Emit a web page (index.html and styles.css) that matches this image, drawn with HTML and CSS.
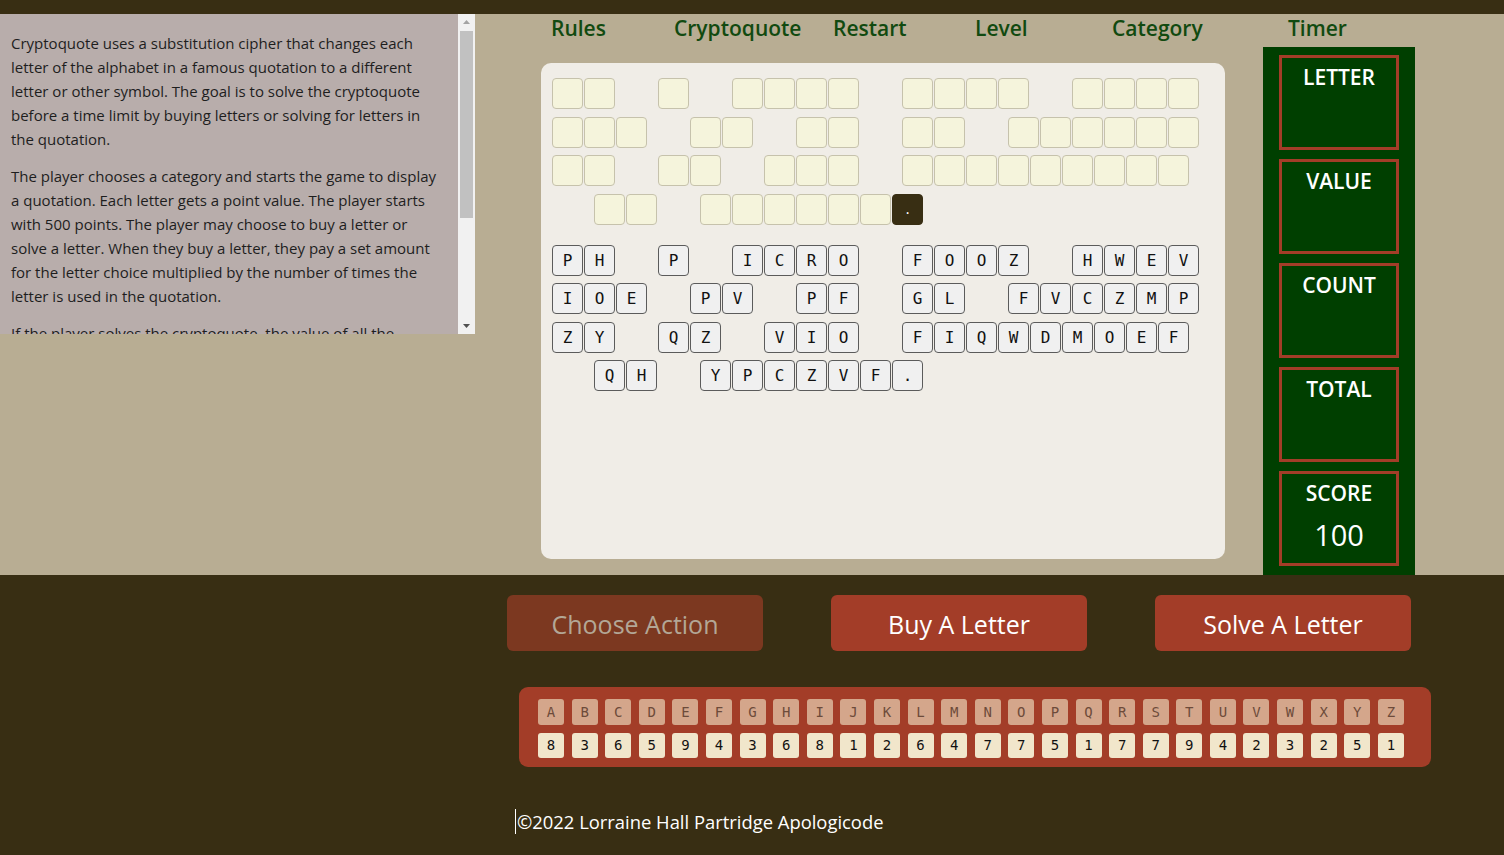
FILE: index.html
```html
<!DOCTYPE html>
<html lang="en">
<head>
<meta charset="utf-8">
<title>Cryptoquote</title>
<link rel="stylesheet" href="styles.css">
</head>
<body>
<div class="topbar"></div>
<div class="main">
  <div class="rules">
    <div class="rules-text">
      <p>Cryptoquote uses a substitution cipher that changes each letter of the alphabet in a famous quotation to a different letter or other symbol. The goal is to solve the cryptoquote before a time limit by buying letters or solving for letters in the quotation.</p>
      <p>The player chooses a category and starts the game to display a quotation. Each letter gets a point value. The player starts with 500 points. The player may choose to buy a letter or solve a letter. When they buy a letter, they pay a set amount for the letter choice multiplied by the number of times the letter is used in the quotation.</p>
      <p class="tight">If the player solves the cryptoquote, the value of all the remaining letters that were not bought is added to the score. If the timer runs out before the quotation is solved, the game is over.</p>
      <p>Choose a level and a category, then press Cryptoquote to begin a new game.</p>
    </div>
    <div class="scrollbar" aria-hidden="true">
      <div class="sb-btn"><svg width="17" height="17" viewBox="0 0 17 17"><path d="M5 10h7L8.5 6z" fill="#a3a3a3"/></svg></div>
      <div class="sb-track"><div class="sb-thumb"></div></div>
      <div class="sb-btn"><svg width="17" height="17" viewBox="0 0 17 17"><path d="M5 7h7L8.5 11z" fill="#505050"/></svg></div>
    </div>
  </div>
  <div class="game">
    <nav class="nav">
      <span>Rules</span>
      <span>Cryptoquote</span>
      <span>Restart</span>
      <span>Level</span>
      <span>Category</span>
      <span>Timer</span>
    </nav>
    <div class="play">
      <div class="board">
        <div class="rows">
          <div class="row"><span class="blank"></span><span class="blank"></span><span class="sp"></span><span class="blank"></span><span class="sp"></span><span class="blank"></span><span class="blank"></span><span class="blank"></span><span class="blank"></span><span class="sp"></span><span class="blank"></span><span class="blank"></span><span class="blank"></span><span class="blank"></span><span class="sp"></span><span class="blank"></span><span class="blank"></span><span class="blank"></span><span class="blank"></span></div>
          <div class="row"><span class="blank"></span><span class="blank"></span><span class="blank"></span><span class="sp"></span><span class="blank"></span><span class="blank"></span><span class="sp"></span><span class="blank"></span><span class="blank"></span><span class="sp"></span><span class="blank"></span><span class="blank"></span><span class="sp"></span><span class="blank"></span><span class="blank"></span><span class="blank"></span><span class="blank"></span><span class="blank"></span><span class="blank"></span></div>
          <div class="row"><span class="blank"></span><span class="blank"></span><span class="sp"></span><span class="blank"></span><span class="blank"></span><span class="sp"></span><span class="blank"></span><span class="blank"></span><span class="blank"></span><span class="sp"></span><span class="blank"></span><span class="blank"></span><span class="blank"></span><span class="blank"></span><span class="blank"></span><span class="blank"></span><span class="blank"></span><span class="blank"></span><span class="blank"></span></div>
          <div class="row"><span class="sp"></span><span class="blank"></span><span class="blank"></span><span class="sp"></span><span class="blank"></span><span class="blank"></span><span class="blank"></span><span class="blank"></span><span class="blank"></span><span class="blank"></span><span class="blank dot">.</span></div>
        </div>
        <div class="rows letters">
          <div class="row"><span class="tile">P</span><span class="tile">H</span><span class="sp"></span><span class="tile">P</span><span class="sp"></span><span class="tile">I</span><span class="tile">C</span><span class="tile">R</span><span class="tile">O</span><span class="sp"></span><span class="tile">F</span><span class="tile">O</span><span class="tile">O</span><span class="tile">Z</span><span class="sp"></span><span class="tile">H</span><span class="tile">W</span><span class="tile">E</span><span class="tile">V</span></div>
          <div class="row"><span class="tile">I</span><span class="tile">O</span><span class="tile">E</span><span class="sp"></span><span class="tile">P</span><span class="tile">V</span><span class="sp"></span><span class="tile">P</span><span class="tile">F</span><span class="sp"></span><span class="tile">G</span><span class="tile">L</span><span class="sp"></span><span class="tile">F</span><span class="tile">V</span><span class="tile">C</span><span class="tile">Z</span><span class="tile">M</span><span class="tile">P</span></div>
          <div class="row"><span class="tile">Z</span><span class="tile">Y</span><span class="sp"></span><span class="tile">Q</span><span class="tile">Z</span><span class="sp"></span><span class="tile">V</span><span class="tile">I</span><span class="tile">O</span><span class="sp"></span><span class="tile">F</span><span class="tile">I</span><span class="tile">Q</span><span class="tile">W</span><span class="tile">D</span><span class="tile">M</span><span class="tile">O</span><span class="tile">E</span><span class="tile">F</span></div>
          <div class="row"><span class="sp"></span><span class="tile">Q</span><span class="tile">H</span><span class="sp"></span><span class="tile">Y</span><span class="tile">P</span><span class="tile">C</span><span class="tile">Z</span><span class="tile">V</span><span class="tile">F</span><span class="tile">.</span></div>
        </div>
      </div>
      <aside class="sidebar">
        <div class="box"><div class="box-label">LETTER</div><div class="box-value"></div></div>
        <div class="box"><div class="box-label">VALUE</div><div class="box-value"></div></div>
        <div class="box"><div class="box-label">COUNT</div><div class="box-value"></div></div>
        <div class="box"><div class="box-label">TOTAL</div><div class="box-value"></div></div>
        <div class="box"><div class="box-label">SCORE</div><div class="box-value">100</div></div>
      </aside>
    </div>
  </div>
</div>
<div class="bottom">
  <div class="actions">
    <button class="btn muted">Choose Action</button>
    <button class="btn">Buy A Letter</button>
    <button class="btn">Solve A Letter</button>
  </div>
  <div class="alpha">
    <span class="al">A</span><span class="al">B</span><span class="al">C</span><span class="al">D</span><span class="al">E</span><span class="al">F</span><span class="al">G</span><span class="al">H</span><span class="al">I</span><span class="al">J</span><span class="al">K</span><span class="al">L</span><span class="al">M</span><span class="al">N</span><span class="al">O</span><span class="al">P</span><span class="al">Q</span><span class="al">R</span><span class="al">S</span><span class="al">T</span><span class="al">U</span><span class="al">V</span><span class="al">W</span><span class="al">X</span><span class="al">Y</span><span class="al">Z</span>
    <span class="num">8</span><span class="num">3</span><span class="num">6</span><span class="num">5</span><span class="num">9</span><span class="num">4</span><span class="num">3</span><span class="num">6</span><span class="num">8</span><span class="num">1</span><span class="num">2</span><span class="num">6</span><span class="num">4</span><span class="num">7</span><span class="num">7</span><span class="num">5</span><span class="num">1</span><span class="num">7</span><span class="num">7</span><span class="num">9</span><span class="num">4</span><span class="num">2</span><span class="num">3</span><span class="num">2</span><span class="num">5</span><span class="num">1</span>
  </div>
  <footer class="footer"><span class="copy">©2022 Lorraine Hall Partridge Apologicode</span></footer>
</div>
</body>
</html>
```

FILE: styles.css
```css
* { box-sizing: border-box; }

body {
  margin: 0;
  background: #382e13;
  font-family: "Open Sans", "Noto Sans", sans-serif;
}

.topbar { height: 14px; }

.main {
  display: flex;
  height: 561px;
  background: #b8ad93;
}

.rules {
  flex: none;
  display: flex;
  width: 475px;
  height: 320px;
  background: #b8adab;
}

.rules-text {
  width: 458px;
  height: 320px;
  overflow: hidden;
  padding: 4px 11px 0 11px;
  color: #1e1e1e;
  font-size: 15px;
  line-height: 24px;
}
.rules-text p { margin: 13px 0; }
.rules-text p.tight { margin-top: 11px; }

.scrollbar {
  display: flex;
  flex-direction: column;
  width: 17px;
  background: #f1f1f1;
}
.sb-btn { height: 17px; flex: none; }
.sb-btn svg { display: block; }
.sb-track { flex: 1; padding: 0 2px; }
.sb-thumb {
  height: 187px;
  background: #c1c1c1;
}

.game {
  margin-left: 66px;
  display: flex;
  flex-direction: column;
}

.nav {
  display: grid;
  grid-template-columns: 123px 159px 142px 137px 176px auto;
  height: 33px;
  padding-left: 10px;
  font-size: 21px;
  font-weight: 600;
  line-height: 28px;
  color: #114a10;
}

.play { display: flex; flex: 1; }

.board {
  width: 684px;
  height: 496px;
  margin-top: 16px;
  padding: 15px 0 0 11px;
  background: #f0ede7;
  border-radius: 10px;
}

.rows {
  display: flex;
  flex-direction: column;
  gap: 7.5px;
}
.letters { margin-top: 20px; }

.row {
  display: flex;
  gap: 1px;
  height: 31px;
}

.sp { width: 41px; flex: none; }

.blank {
  flex: none;
  width: 31px;
  height: 31px;
  border: 1px solid #c6c2ac;
  border-radius: 4px;
  background: #f5f4dc;
}
.blank.dot {
  background: #382e13;
  border-color: #382e13;
  color: #fff;
  font: 12px/31px "DejaVu Sans Mono", monospace;
  text-align: center;
}

.tile {
  flex: none;
  width: 31px;
  height: 31px;
  border: 1px solid #5b5b5b;
  border-radius: 4px;
  background: #f0f0f0;
  color: #111;
  font: 16px/29px "DejaVu Sans Mono", monospace;
  text-align: center;
}

.sidebar {
  width: 152px;
  margin-left: 38px;
  padding: 8px 16px 0;
  background: #003f00;
}

.box {
  height: 95px;
  margin-bottom: 9px;
  border: 3px solid #a33d28;
  color: #fff;
  text-align: center;
}
.box-label {
  padding-top: 5px;
  font-size: 21px;
  font-weight: 600;
  line-height: 28px;
}
.box-value {
  margin-top: 10px;
  font-size: 29px;
  line-height: 36px;
}

.bottom {
  height: 280px;
  padding-top: 20px;
}

.actions {
  display: flex;
  gap: 68px;
  margin-left: 507px;
}

.btn {
  width: 256px;
  height: 56px;
  border: none;
  border-radius: 6px;
  background: #a33d28;
  color: #fff;
  font-family: "Open Sans", "Noto Sans", sans-serif;
  font-size: 25px;
  padding: 2px 0 0;
}
.btn.muted {
  background: #7c3820;
  color: #b3a796;
}

.alpha {
  display: grid;
  grid-template-columns: repeat(26, 26px);
  grid-template-rows: 26px 25px;
  column-gap: 7.6px;
  row-gap: 8px;
  width: 912px;
  height: 80px;
  margin: 36px 0 0 519px;
  padding: 12px 0 0 19px;
  background: #a33d28;
  border-radius: 9px;
  font-family: "DejaVu Sans Mono", monospace;
  font-size: 14px;
}
.al, .num {
  border-radius: 3px;
  text-align: center;
}
.al {
  background: #d4a68b;
  color: #6d4b3a;
  line-height: 26px;
}
.num {
  background: #f1e6cb;
  color: #111;
  line-height: 25px;
}

.footer {
  margin: 42px 0 0 515px;
  color: #fff;
  font-size: 18.4px;
  line-height: 25px;
}
.copy {
  border-left: 1px solid #fff;
  padding-left: 1px;
}
```
